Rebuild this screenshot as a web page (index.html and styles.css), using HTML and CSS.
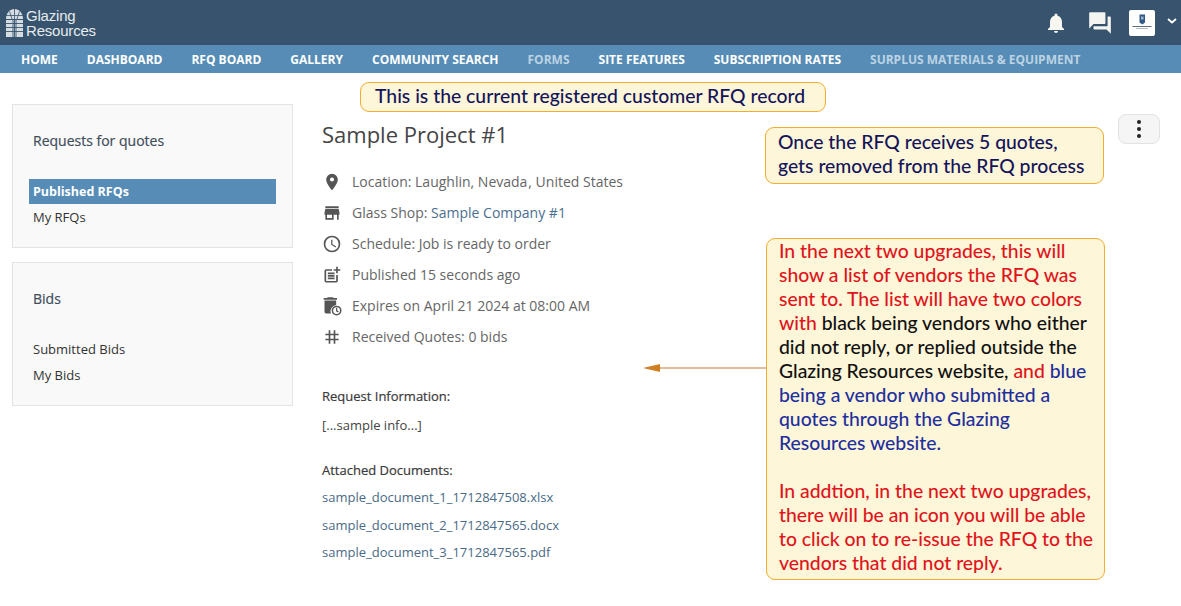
FILE: index.html
```html
<!DOCTYPE html>
<html lang="en">
<head>
<meta charset="utf-8">
<title>Sample Project #1</title>
<link rel="stylesheet" href="styles.css">
</head>
<body>
<header class="topbar">
  <a class="brand" href="#">
    <svg class="brand-mark" viewBox="0 0 17 28" width="17" height="28" aria-hidden="true">
      <path d="M0 10C0 4 4 0 8.500 0S17 4 17 10z" fill="#d5dde3"/>
      <path d="M8.500 0v10M3.500 2.500L6 10M13.500 2.500L11 10M0 6.500h17" stroke="#37536d" stroke-width=".8"/>
      <path d="M0 11h17v17H0z" fill="#d5dde3"/>
      <path d="M8.500 11v17M0 14.500h17M0 18.500h17M0 22.500h17M7 11v17M10 11v17" stroke="#37536d" stroke-width=".9"/>
    </svg>
    <span class="brand-name">Glazing<br>Resources</span>
  </a>
  <div class="top-actions">
    <svg class="top-icon bell" viewBox="0 0 24 24" width="24" height="24" aria-hidden="true"><path d="M12 22a2 2 0 0 0 2-2h-4a2 2 0 0 0 2 2zm6-6v-5c0-3.100-1.600-5.600-4.500-6.300V4a1.500 1.500 0 0 0-3 0v.7C7.600 5.400 6 7.900 6 11v5l-2 2v1h16v-1z" fill="#f7f6f0"/></svg>
    <svg class="top-icon chat" viewBox="0 0 24 24" width="26" height="26" aria-hidden="true"><path d="M21 6h-2v9H6v2c0 .6.400 1 1 1h11l4 4V7c0-.6-.4-1-1-1zm-4 6V3c0-.6-.4-1-1-1H3c-.6 0-1 .4-1 1v14l4-4h10c.6 0 1-.4 1-1z" fill="#f4f4f0"/></svg>
    <span class="avatar">
      <svg viewBox="0 0 26 26" width="26" height="26" aria-hidden="true">
        <path d="M10.500 4.500h5.500v8l-2.700 2-2.800-2z" fill="#2f5a85"/>
        <path d="M12 6.500h2.500v3H12z" fill="#9db7cf"/>
        <path d="M3.500 16.500h19" stroke="#5d6f80" stroke-width="1"/>
        <path d="M7 18.500h12" stroke="#b5bec7" stroke-width="1"/>
      </svg>
    </span>
    <svg class="caret" viewBox="0 0 10 6" width="10" height="6" aria-hidden="true"><path d="M1 1l4 3.500L9 1" fill="none" stroke="#fff" stroke-width="1.800"/></svg>
  </div>
</header>
<nav class="mainnav">
  <a href="#">HOME</a>
  <a href="#">DASHBOARD</a>
  <a href="#">RFQ BOARD</a>
  <a href="#">GALLERY</a>
  <a href="#">COMMUNITY SEARCH</a>
  <a href="#" class="muted">FORMS</a>
  <a href="#">SITE FEATURES</a>
  <a href="#">SUBSCRIPTION RATES</a>
  <a href="#" class="muted">SURPLUS MATERIALS &amp; EQUIPMENT</a>
</nav>
<main class="page">
  <aside class="sidebar">
    <section class="panel">
      <h2>Requests for quotes</h2>
      <ul class="panel-list">
        <li class="active"><a href="#">Published RFQs</a></li>
        <li><a href="#">My RFQs</a></li>
      </ul>
    </section>
    <section class="panel">
      <h2>Bids</h2>
      <ul class="panel-list">
        <li><a href="#">Submitted Bids</a></li>
        <li><a href="#">My Bids</a></li>
      </ul>
    </section>
  </aside>
  <article class="record">
    <h1>Sample Project #1</h1>
    <ul class="facts">
      <li>
        <svg viewBox="0 0 24 24" width="20" height="20" aria-hidden="true"><path d="M12 2a7 7 0 0 0-7 7c0 5.200 7 13 7 13s7-7.800 7-13a7 7 0 0 0-7-7zm0 9.500a2.500 2.500 0 1 1 0-5 2.500 2.500 0 0 1 0 5z"/></svg>
        <span>Location: Laughlin, Nevada<span class="tight">,</span> United States</span>
      </li>
      <li>
        <svg viewBox="0 0 24 24" width="20" height="20" aria-hidden="true"><path d="M20 4H4v2h16zm1 10v-2l-1-5H4l-1 5v2h1v6h10v-6h4v6h2v-6zm-9 4H6v-4h6z"/></svg>
        <span>Glass Shop: <a href="#">Sample Company #1</a></span>
      </li>
      <li>
        <svg viewBox="0 0 24 24" width="20" height="20" aria-hidden="true"><path d="M12 2a10 10 0 1 0 0 20 10 10 0 0 0 0-20zm0 18a8 8 0 1 1 0-16 8 8 0 0 1 0 16zm.5-13H11v6l5.200 3.200.8-1.300-4.500-2.700z"/></svg>
        <span>Schedule: Job is ready to order</span>
      </li>
      <li>
        <svg viewBox="0 0 24 24" width="20" height="20" aria-hidden="true"><path d="M17 19.200H5V7h7V5H5a2 2 0 0 0-2 2v12a2 2 0 0 0 2 2h12a2 2 0 0 0 2-2v-7h-2zM19 2h-2v3h-3l.01 2H17v3h2V7h3V5h-3zM7 9h8v2H7zm0 3v2h8v-2zm0 3h8v2H7z"/></svg>
        <span>Published 15 seconds ago</span>
      </li>
      <li>
        <svg viewBox="0 0 24 24" width="20" height="20" aria-hidden="true">
          <path d="M7 1.500h6l1 1h4v2H2v-2h4zM3 5.500h14v5.300A7.500 7.500 0 0 0 10.700 21H5a2 2 0 0 1-2-2z"/>
          <circle class="ring" cx="17.500" cy="17.500" r="5"/>
          <path class="hand" d="M17.500 14.500v3.300l2.300 1.400"/>
        </svg>
        <span>Expires on April 21 2024 at 08:00 AM</span>
      </li>
      <li>
        <svg viewBox="0 0 24 24" width="20" height="20" aria-hidden="true"><path d="M20 10V8h-4V4h-2v4h-4V4H8v4H4v2h4v4H4v2h4v4h2v-4h4v4h2v-4h4v-2h-4v-4zm-6 4h-4v-4h4z"/></svg>
        <span>Received Quotes: 0 bids</span>
      </li>
    </ul>
    <h3>Request Information:</h3>
    <p class="info">[...sample info...]</p>
    <h3 class="docs-title">Attached Documents:</h3>
    <ul class="docs">
      <li><a href="#">sample_document_1_1712847508.xlsx</a></li>
      <li><a href="#">sample_document_2_1712847565.docx</a></li>
      <li><a href="#">sample_document_3_1712847565.pdf</a></li>
    </ul>
  </article>
  <button class="more" type="button" aria-label="More"><i></i><i></i><i></i></button>
</main>
<div class="note note-top">This is the current registered customer RFQ record</div>
<div class="note note-quotes">Once the RFQ receives 5 quotes,<br>gets removed from the RFQ process</div>
<div class="note note-main">
  <p><span class="red">In the next two upgrades, this will show a list of vendors the RFQ was sent to. The list will have two colors with</span> black being vendors who either did not reply, or replied outside the Glazing Resources website, <span class="red">and</span> <span class="blue">blue being a vendor who submitted a quotes through the Glazing Resources website.</span></p>
  <p class="red">In addtion, in the next two upgrades, there will be an icon you will be able to click on to re-issue the RFQ to the vendors that did not reply.</p>
</div>
<svg class="arrow" viewBox="0 0 124 10" width="124" height="10" aria-hidden="true">
  <path d="M14 5h110" stroke="#dca673" stroke-width="1.500"/>
  <path d="M0 5l17-4v8z" fill="#d27f24"/>
</svg>
</body>
</html>
```

FILE: styles.css
```css
* { box-sizing: border-box; }
html, body { margin: 0; padding: 0; }
body {
  position: relative;
  height: 606px;
  overflow: hidden;
  background: #fff;
  color: #555;
  font-family: "Open Sans", "Liberation Sans", sans-serif;
  font-size: 14px;
}
a { color: inherit; text-decoration: none; }
ul { list-style: none; margin: 0; padding: 0; }

.topbar {
  height: 45px;
  background: #37536d;
  display: flex;
  align-items: center;
  justify-content: space-between;
  padding: 0 4px 0 6px;
}
.brand { display: flex; align-items: center; gap: 3px; color: #e6ebef; }
.brand-name {
  font-family: "Liberation Sans", sans-serif;
  font-size: 15px;
  line-height: 15px;
  letter-spacing: -0.200px;
}
.top-actions { display: flex; align-items: center; }
.top-icon { display: block; }
.chat { margin-left: 19px; }
.avatar {
  width: 26px;
  height: 26px;
  margin-left: 16px;
  background: #fff;
  border-radius: 2px;
  display: block;
}
.avatar svg { display: block; }
.caret { margin-left: 12px; margin-top: -3px; }

.mainnav {
  height: 28px;
  background: #568cb5;
  display: flex;
  align-items: center;
  gap: 29px;
  padding-left: 21px;
  color: #fff;
  font-size: 12px;
  font-weight: 700;
}
.mainnav .muted { color: #bcd3e4; }

.page {
  display: flex;
  align-items: flex-start;
  padding: 31px 21px 0 12px;
}
.sidebar {
  width: 281px;
  flex: none;
  display: flex;
  flex-direction: column;
  gap: 14px;
}
.panel {
  height: 144px;
  background: #f9f9f9;
  border: 1px solid #e3e3e3;
  padding: 26px 16px 0;
}
.panel h2 {
  margin: 0 0 29px 4px;
  font-size: 14px;
  line-height: 19px;
  font-weight: 400;
  color: #3f4d5a;
  -webkit-text-stroke: 0.200px #3f4d5a;
}
.panel-list { color: #333; font-size: 13px; }
.panel-list li { height: 25px; line-height: 25px; padding-left: 4px; margin-bottom: 1px; }
.panel-list .active {
  background: #568cb5;
  color: #fff;
  font-size: 12.500px;
  font-weight: 700;
}

.record { width: 440px; flex: none; margin-left: 29px; padding-top: 16px; }
.record h1 {
  margin: 0 0 18px;
  font-size: 22px;
  line-height: 28px;
  font-weight: 500;
  color: #444;
}
.facts li {
  display: flex;
  align-items: center;
  gap: 10px;
  height: 31px;
  font-size: 14px;
  color: #666;
}
.facts svg { display: block; flex: none; fill: #555; }
.facts .ring { fill: #fff; stroke: #555; stroke-width: 1.800; }
.facts .hand { fill: none; stroke: #555; stroke-width: 1.500; }
.facts a { color: #4a6f8e; }
.tight { margin-left: 1px; }
.record h3 {
  margin: 35px 0 0;
  font-size: 13px;
  line-height: 18px;
  font-weight: 500;
  color: #3a3a3a;
  -webkit-text-stroke: 0.200px #3a3a3a;
}
.record .docs-title { margin-top: 27px; }
.info { margin: 11px 0 0; font-size: 13px; line-height: 18px; color: #444; }
.docs { margin-top: 5px; font-size: 13px; color: #4a6a85; }
.docs li { height: 27.500px; line-height: 27.500px; }

.more {
  width: 42px;
  height: 30px;
  margin-left: auto;
  margin-top: 10px;
  border: 1px solid #e2e2e2;
  border-radius: 8px;
  background: #f5f5f5;
  padding: 0;
  display: flex;
  flex-direction: column;
  align-items: center;
  justify-content: center;
  gap: 3px;
}
.more i { width: 4px; height: 4px; border-radius: 50%; background: #222; display: block; }

.note {
  position: absolute;
  background: #fdf6d9;
  border: 1px solid #f0ad2e;
  border-radius: 9px;
  font-family: Lato, "Liberation Sans", sans-serif;
  font-weight: 500;
  font-size: 19.350px;
  color: #14145a;
}
.note-top {
  left: 360px;
  top: 82px;
  width: 466px;
  height: 30px;
  padding-left: 14px;
  line-height: 26px;
}
.note-quotes {
  left: 765px;
  top: 127px;
  width: 339px;
  height: 57px;
  padding: 2px 0 0 12px;
  line-height: 24px;
}
.note-main {
  left: 766px;
  top: 238px;
  width: 339px;
  height: 342px;
  padding: 0 10px 0 12px;
  line-height: 24px;
  color: #111;
}
.note-main p { margin: 0 0 24px; }
.red { color: #e0141c; }
.blue { color: #1f2f9e; }
.arrow { position: absolute; left: 643px; top: 363px; }
```
